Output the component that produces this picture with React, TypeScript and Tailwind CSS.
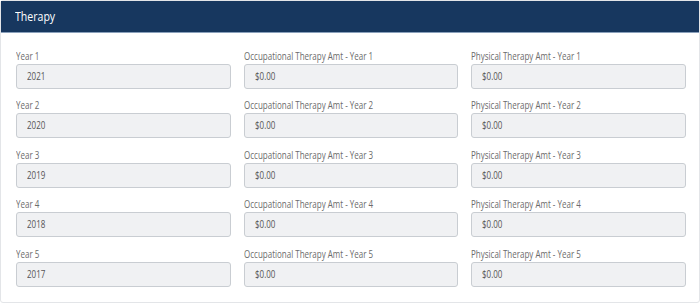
import React from "react";

const years = ["2021", "2020", "2019", "2018", "2017"];

function Field({ label, value }: { label: string; value: string }) {
  return (
    <div className="flex flex-col">
      <div className="h-[14px] text-[10px] leading-[14px] text-[#6b6b6b] whitespace-nowrap">
        <span className="inline-block origin-left scale-x-[0.8]">{label}</span>
      </div>
      <div className="mt-[1px] h-[25px] rounded-[3px] border border-[#c9cdd2] bg-[#f0f1f3] flex items-center px-[10px] text-[10px] text-[#555]">
        <span className="inline-block origin-left scale-x-[0.8]">{value}</span>
      </div>
    </div>
  );
}

export default function App() {
  return (
    <div className="w-[700px] h-[305px] bg-white" style={{ fontFamily: '"Open Sans", sans-serif' }}>
      <div className="w-[700px] h-[303px] border border-[#e3e5e8] rounded-[3px] flex flex-col">
        <div className="h-[32px] bg-[#17375f] border-b border-[#8aa0bb] flex items-center pl-[14px] text-white text-[12px]">
          <span className="inline-block origin-left scale-x-[0.88]">Therapy</span>
        </div>
        <div className="grid grid-cols-3 gap-x-[13px] gap-y-[9.4px] pl-[15px] pr-[13px] pt-[16px]">
          {years.map((y, i) => (
            <React.Fragment key={y}>
              <Field label={`Year ${i + 1}`} value={y} />
              <Field label={`Occupational Therapy Amt - Year ${i + 1}`} value="$0.00" />
              <Field label={`Physical Therapy Amt - Year ${i + 1}`} value="$0.00" />
            </React.Fragment>
          ))}
        </div>
      </div>
    </div>
  );
}
